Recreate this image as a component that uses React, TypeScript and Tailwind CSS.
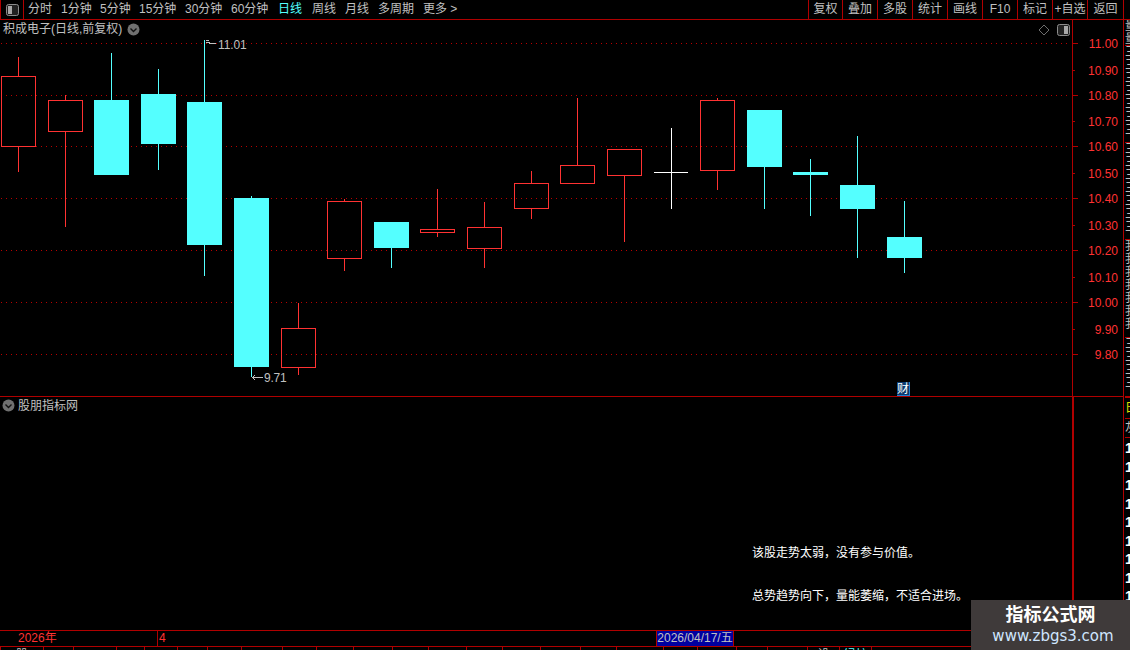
const font = "[font-family:'Liberation_Sans','Noto_Sans_CJK_SC',sans-serif]";

const periods = [
  { label: "分时", w: "w-[33px]" },
  { label: "1分钟", w: "w-[39px]" },
  { label: "5分钟", w: "w-[39px]" },
  { label: "15分钟", w: "w-[46px]" },
  { label: "30分钟", w: "w-[46px]" },
  { label: "60分钟", w: "w-[47px]" },
  { label: "日线", w: "w-[34px]", active: true },
  { label: "周线", w: "w-[33px]" },
  { label: "月线", w: "w-[33px]" },
  { label: "多周期", w: "w-[45px]" },
];

const actions = ["复权", "叠加", "多股", "统计", "画线", "F10", "标记", "+自选"];

// x, body top, body bottom, wick top, wick bottom, kind
const candles: [number, number, number, number, number, string][] = [
  [1, 76, 147, 57, 172, "up"],
  [48, 100, 132, 95, 227, "up"],
  [94, 100, 175, 53, 175, "down"],
  [141, 94, 144, 69, 170, "down"],
  [187, 102, 245, 40, 276, "down"],
  [234, 198, 367, 196, 377, "down"],
  [281, 328, 368, 303, 375, "up"],
  [327, 201, 259, 199, 271, "up"],
  [374, 222, 248, 222, 268, "down"],
  [420, 229, 233, 189, 237, "up"],
  [467, 227, 249, 202, 268, "up"],
  [514, 183, 209, 171, 219, "up"],
  [560, 165, 184, 98, 184, "up"],
  [607, 149, 176, 149, 242, "up"],
  [654, 172, 173, 128, 209, "doji"],
  [700, 100, 171, 98, 190, "up"],
  [747, 110, 167, 110, 209, "down"],
  [793, 172, 175, 159, 216, "down"],
  [840, 185, 209, 136, 258, "down"],
  [887, 237, 258, 201, 273, "down"],
];

const gridLines = [43, 95, 146, 198, 250, 302, 354];

const prices: [string, number][] = [
  ["11.00", 43],
  ["10.90", 70],
  ["10.80", 95],
  ["10.70", 121],
  ["10.60", 146],
  ["10.50", 173],
  ["10.40", 198],
  ["10.30", 225],
  ["10.20", 250],
  ["10.10", 277],
  ["10.00", 302],
  ["9.90", 329],
  ["9.80", 354],
];

const bottomTabs = [
  { w: 43, text: "A股", left: true },
  { w: 30, text: "1", left: true },
  { w: 43, text: "" },
  { w: 28, text: "" },
  { w: 33, text: "" },
  { w: 30, text: "" },
  { w: 34, text: "" },
  { w: 41, text: "" },
  { w: 34, text: "" },
  { w: 37, text: "" },
  { w: 39, text: "" },
  { w: 36, text: "" },
  { w: 38, text: "" },
  { w: 36, text: "" },
  { w: 38, text: "" },
  { w: 40, text: "" },
  { w: 36, text: "" },
  { w: 47, text: "" },
  { w: 34, text: "" },
  { w: 39, text: "" },
  { w: 31, text: "" },
  { w: 40, text: "" },
  { w: 32, text: "设" },
  { w: 32, text: "绿柱", cyan: true },
  { w: 100, text: "" },
];

function Chevron() {
  return (
    <svg width="13" height="13" viewBox="0 0 13 13" className="shrink-0">
      <circle cx="6.5" cy="6.5" r="6" fill="#707070" />
      <path d="M3.5 5.5 L6.5 8.5 L9.5 5.5" fill="none" stroke="#111" strokeWidth="1.4" />
    </svg>
  );
}

function PanelIcon({ side }: { side: "left" | "right" }) {
  return (
    <svg width="13" height="12" viewBox="0 0 13 12">
      <rect x="0.5" y="0.5" width="12" height="11" rx="2" fill="#222" stroke="#8c8c8c" />
      <rect x={side === "left" ? 2 : 7} y="2" width="4" height="8" fill="#a8a8a8" />
    </svg>
  );
}

function Candle({ c }: { c: (typeof candles)[number] }) {
  const [x, top, bottom, wickTop, wickBottom, kind] = c;
  const wx = x + 17;
  if (kind === "doji") {
    return (
      <g fill="#ffffff">
        <rect x={wx} y={wickTop} width="1" height={wickBottom - wickTop} />
        <rect x={x} y={top} width="34" height="1" />
      </g>
    );
  }
  if (kind === "down") {
    return (
      <g fill="#54ffff">
        <rect x={wx} y={wickTop} width="1" height={wickBottom - wickTop} />
        <rect x={x} y={top} width="35" height={bottom - top} />
      </g>
    );
  }
  return (
    <g>
      <rect x={wx} y={wickTop} width="1" height={Math.max(top - wickTop, 0)} fill="#ff3232" />
      <rect x={wx} y={bottom} width="1" height={Math.max(wickBottom - bottom, 0)} fill="#ff3232" />
      <rect x={x + 0.5} y={top + 0.5} width="34" height={bottom - top - 1} fill="none" stroke="#ff3232" />
    </g>
  );
}

function StripRows({ text, rows, color }: { text: string; rows: number; color: string }) {
  return (
    <div className={`overflow-hidden text-[12px] leading-[13px] whitespace-nowrap ${color}`}>
      {Array.from({ length: rows }).map((_, i) => (
        <div key={i}>{text}</div>
      ))}
    </div>
  );
}

export default function App() {
  return (
    <div className={`w-[1130px] h-[650px] bg-black overflow-hidden relative flex flex-col text-[12px] text-[#c0c0c0] ${font}`}>
      {/* Toolbar */}
      <div className="h-[20px] shrink-0 flex border-b border-[#b00000] leading-[19px]">
        <div className="w-[24px] border-x border-[#b00000] flex items-center justify-center">
          <PanelIcon side="left" />
        </div>
        <div className="flex pl-[4px] flex-1">
          {periods.map((p) => (
            <span key={p.label} className={`${p.w} shrink-0 ${p.active ? "text-[#54ffff]" : ""}`}>
              {p.label}
            </span>
          ))}
          <span>更多 &gt;</span>
        </div>
        {actions.map((a, i) => (
          <div key={a} className={`border-l border-[#b00000] text-center ${i === 0 ? "w-[34px]" : "w-[35px]"}`}>
            {a}
          </div>
        ))}
        <div className="w-[37px] border-x border-[#b00000] text-center">返回</div>
        <div className="w-[6px]" />
      </div>

      <div className="flex-1 flex min-h-0">
        <div className="w-[1123px] shrink-0 flex flex-col">
          {/* Price pane */}
          <div className="h-[377px] shrink-0 flex border-b border-[#b00000]">
            <div className="w-[1072px] shrink-0 relative">
              <svg width="1072" height="376" viewBox="0 20 1072 376" shapeRendering="crispEdges" className="block">
                {gridLines.map((y) => (
                  <line key={y} x1="1" x2="1071" y1={y + 0.5} y2={y + 0.5} stroke="#b80000" strokeDasharray="1 4" />
                ))}
                {candles.map((c) => (
                  <Candle key={c[0]} c={c} />
                ))}
                <path d="M205.5 40.5 H209 M205.5 42.5 H208 M208 42.5 L211 43.5 H216" fill="none" stroke="#c0c0c0" />
                <path d="M252 377.5 H263 M252.5 377.5 L255 375 M252.5 377.5 L255 380" fill="none" stroke="#c0c0c0" />
              </svg>
              <div className="absolute left-[3px] top-[1px] flex items-center gap-[5px] leading-[17px]">
                <span>积成电子(日线,前复权)</span>
                <Chevron />
              </div>
              <span className="absolute left-[218px] top-[18px] leading-[14px] tracking-[-0.1px]">11.01</span>
              <span className="absolute left-[264px] top-[351px] leading-[14px] tracking-[-0.2px]">9.71</span>
              <svg width="12" height="12" viewBox="0 0 12 12" className="absolute left-[1038px] top-[4px]">
                <path d="M6 1 L11 6 L6 11 L1 6 Z" fill="none" stroke="#6e6e6e" />
              </svg>
              <div className="absolute left-[1057px] top-[4px]">
                <PanelIcon side="right" />
              </div>
              <span className="absolute left-[897px] top-[362px] w-[13px] h-[14px] bg-[#0b3a6e] border-r border-b border-[#1f7fd0] text-white text-[12px] leading-[14px] text-center">
                财
              </span>
            </div>
            <div className="flex-1 border-l border-[#b00000]">
              <svg width="50" height="376" viewBox="1073 20 50 376" className="block">
                {prices.map(([label, y], i) => (
                  <g key={label}>
                    <rect x="1073" y={y} width={i % 2 === 0 ? 5 : 2} height="1" fill="#b00000" />
                    <text
                      x="1118"
                      y={y + 5}
                      textAnchor="end"
                      fontSize="12"
                      fontFamily="'Liberation Sans', sans-serif"
                      fill="#ff3232"
                    >
                      {label}
                    </text>
                  </g>
                ))}
              </svg>
            </div>
          </div>

          {/* Indicator pane */}
          <div className="h-[233px] shrink-0 flex">
            <div className="w-[1072px] shrink-0">
              <div className="flex items-center gap-[3px] pl-[2px] h-[17px]">
                <Chevron />
                <span>股朋指标网</span>
              </div>
              <div className="pl-[752px] pt-[131px] text-white leading-[16px] whitespace-nowrap">
                <div>该股走势太弱，没有参与价值。</div>
                <div className="mt-[27px]">总势趋势向下，量能萎缩，不适合进场。</div>
              </div>
            </div>
            <div className="flex-1 border-l-2 border-[#b00000]" />
          </div>

          {/* Time axis */}
          <div className="h-[17px] shrink-0 flex border-y border-[#b00000] text-[#ff3232] leading-[15px]">
            <div className="w-[157px] pl-[18px]">2026年</div>
            <div className="w-[499px] border-l border-[#b00000] pl-[1px]">4</div>
            <div className="w-[78px] bg-[#0000a0] border-x border-[#b00000] text-[#c0c0c0] text-center whitespace-nowrap overflow-hidden">
              2026/04/17/五
            </div>
          </div>

          {/* Clipped tabs along the window edge */}
          <div className="flex-1 flex overflow-hidden leading-[16px]">
            {bottomTabs.map((t, i) => (
              <div
                key={i}
                style={{ width: t.w }}
                className={`shrink-0 border-l border-[#b00000] whitespace-nowrap ${t.left ? "text-left pl-[7px]" : "text-center"} ${t.cyan ? "text-[#54ffff]" : ""}`}
              >
                {t.text}
              </div>
            ))}
          </div>
        </div>

        {/* Right strip, cut off by the window */}
        <div className="flex-1 min-w-0 border-l border-[#b00000] overflow-hidden flex flex-col pl-[1px]">
          <div className="h-[26px] shrink-0 border-b border-[#b00000] overflow-hidden">
            <StripRows text="量比" rows={2} color="text-[#c0c0c0]" />
          </div>
          <div className="h-[97px] shrink-0 border-b border-[#b00000] overflow-hidden">
            <StripRows text="三" rows={7} color="text-[#c0c0c0]" />
          </div>
          <div className="h-[97px] shrink-0 border-b border-[#b00000] overflow-hidden">
            <StripRows text="三" rows={7} color="text-[#c0c0c0]" />
          </div>
          <div className="h-[98px] shrink-0 border-b border-[#b00000] overflow-hidden">
            <StripRows text="我" rows={7} color="text-[#c0c0c0]" />
          </div>
          <div className="h-[60px] shrink-0 border-b-2 border-[#b00000] overflow-hidden">
            <StripRows text="三" rows={4} color="text-[#c0c0c0]" />
          </div>
          <div className="h-[21px] shrink-0 border-b border-[#b00000] text-[#e0e000] leading-[20px]">日</div>
          <div className="h-[19px] shrink-0 border-b border-[#b00000] leading-[18px]">灰</div>
          <div className="flex-1 text-white font-bold text-[14px] leading-[18.5px] pt-[1px]">
            {Array.from({ length: 11 }).map((_, i) => (
              <div key={i}>1</div>
            ))}
          </div>
        </div>
      </div>

      {/* Site watermark */}
      <div className="absolute left-[971px] top-[600px] w-[159px] h-[50px] bg-[#3f3a3a] flex flex-col items-center pt-[4px]">
        <div className="text-white font-bold text-[18px] leading-[22px]">指标公式网</div>
        <div className="ml-[5px] text-[#cfe6ff] text-[15px] leading-[20px] [font-family:'DejaVu_Sans',sans-serif]">
          www.zbgs3.com
        </div>
      </div>
    </div>
  );
}
